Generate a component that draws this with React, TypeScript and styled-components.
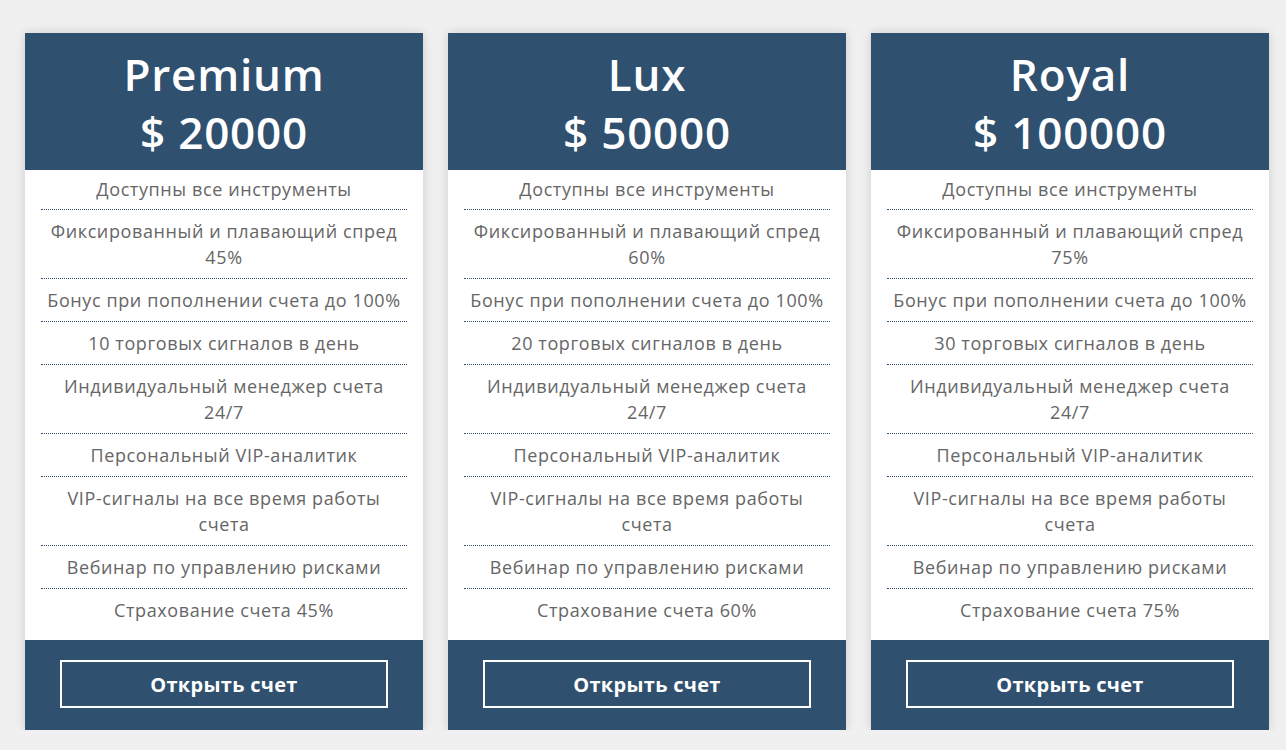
import React from 'react'
import styled, { createGlobalStyle } from 'styled-components'

const GlobalStyle = createGlobalStyle`
  body {
    margin: 0;
    background: #f0f0f0;
    font-family: "Open Sans", "Liberation Sans", sans-serif;
  }
`

const Page = styled.div`
  display: flex;
  gap: 25px;
  padding: 33px 0 0 25px;
`

const Card = styled.div`
  width: 398px;
  display: flex;
  flex-direction: column;
  background: #fff;
  box-shadow: 0 0 10px rgba(0, 0, 0, 0.15);
`

const Header = styled.div`
  height: 137px;
  box-sizing: border-box;
  padding-top: 12px;
  background: #30506f;
  color: #fff;
  text-align: center;
  font-size: 44px;
  font-weight: 600;
  letter-spacing: 0.8px;
  line-height: 58px;
`

const List = styled.ul`
  list-style: none;
  margin: 0;
  padding: 0 16px 9px;
`

const Item = styled.li`
  padding: 8px 0;
  text-align: center;
  font-size: 18px;
  letter-spacing: 0.6px;
  line-height: 26px;
  color: #666;
  border-bottom: 1px dotted #30506f;
  &:first-child {
    padding-top: 6px;
    padding-bottom: 7px;
  }
  &:last-child {
    border-bottom: none;
  }
`

const Footer = styled.div`
  margin-top: auto;
  height: 90px;
  box-sizing: border-box;
  padding: 20px 35px 0;
  background: #30506f;
`

const OpenButton = styled.button`
  width: 100%;
  height: 48px;
  border: 2px solid #fff;
  background: transparent;
  color: #fff;
  font-family: inherit;
  font-size: 20px;
  font-weight: 700;
  letter-spacing: 0.3px;
  cursor: pointer;
`

const plans = [
  { name: 'Premium', price: '20000', spread: '45%', signals: 10, insurance: '45%' },
  { name: 'Lux', price: '50000', spread: '60%', signals: 20, insurance: '60%' },
  { name: 'Royal', price: '100000', spread: '75%', signals: 30, insurance: '75%' }
]

export default function App() {
  return (
    <>
      <GlobalStyle />
      <Page>
        {plans.map(plan => (
          <Card key={plan.name}>
            <Header>
              <div>{plan.name}</div>
              <div>$ {plan.price}</div>
            </Header>
            <List>
              <Item>Доступны все инструменты</Item>
              <Item>
                Фиксированный и плавающий спред
                <br />
                {plan.spread}
              </Item>
              <Item>Бонус при пополнении счета до 100%</Item>
              <Item>{plan.signals} торговых сигналов в день</Item>
              <Item>
                Индивидуальный менеджер счета
                <br />
                24/7
              </Item>
              <Item>Персональный VIP-аналитик</Item>
              <Item>
                VIP-сигналы на все время работы
                <br />
                счета
              </Item>
              <Item>Вебинар по управлению рисками</Item>
              <Item>Страхование счета {plan.insurance}</Item>
            </List>
            <Footer>
              <OpenButton>Открыть счет</OpenButton>
            </Footer>
          </Card>
        ))}
      </Page>
    </>
  )
}
